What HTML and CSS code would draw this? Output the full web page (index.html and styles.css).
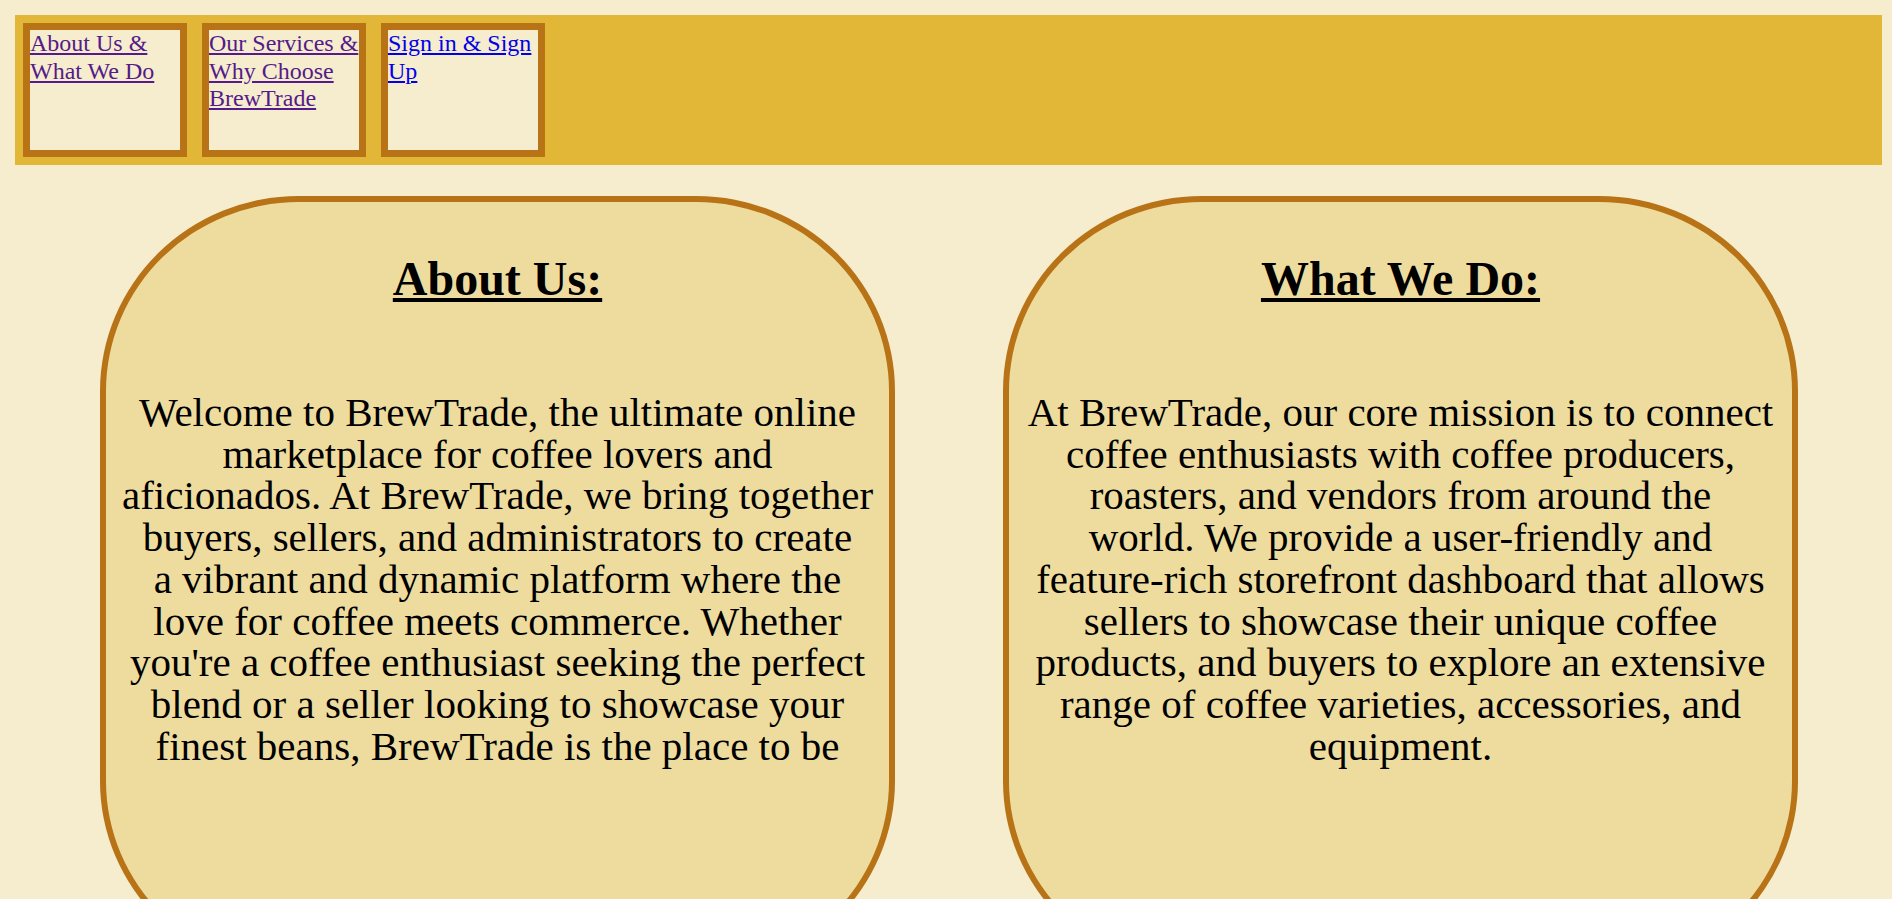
FILE: index.html
```html
<!DOCTYPE html>
<html lang="en">
<head>
<meta charset="utf-8">
<title>BrewTrade - About Us</title>
<link rel="stylesheet" href="styles.css">
</head>
<body>
<header class="topbar">
  <nav class="nav">
    <div class="nav-box"><a class="nav-link visited" href="#about">About Us &amp; What We Do</a></div>
    <div class="nav-box"><a class="nav-link visited" href="#services">Our Services &amp; Why Choose BrewTrade</a></div>
    <div class="nav-box"><a class="nav-link" href="#signin">Sign in &amp; Sign Up</a></div>
  </nav>
</header>
<main class="cards">
  <section class="card" id="about">
    <h1 class="card-title">About Us:</h1>
    <p class="card-text">Welcome to BrewTrade, the ultimate online<br>marketplace for coffee lovers and<br>aficionados. At BrewTrade, we bring together<br>buyers, sellers, and administrators to create<br>a vibrant and dynamic platform where the<br>love for coffee meets commerce. Whether<br>you're a coffee enthusiast seeking the perfect<br>blend or a seller looking to showcase your<br>finest beans, BrewTrade is the place to be</p>
  </section>
  <section class="card">
    <h1 class="card-title">What We Do:</h1>
    <p class="card-text">At BrewTrade, our core mission is to connect<br>coffee enthusiasts with coffee producers,<br>roasters, and vendors from around the<br>world. We provide a user-friendly and<br>feature-rich storefront dashboard that allows<br>sellers to showcase their unique coffee<br>products, and buyers to explore an extensive<br>range of coffee varieties, accessories, and<br>equipment.</p>
  </section>
</main>
</body>
</html>
```

FILE: styles.css
```css
html, body {
  margin: 0;
  padding: 0;
}

body {
  background: #f5edcd;
  font-family: "Liberation Serif", "Times New Roman", serif;
  color: #000;
}

.topbar {
  margin: 15px 10px 0 15px;
  padding: 8px;
  background: #e2b737;
}

.nav {
  display: flex;
  gap: 15px;
}

.nav-box {
  width: 150px;
  height: 120px;
  border: 7px solid #b87317;
  background: #f5edcd;
}

.nav-link {
  font-size: 24px;
  line-height: 27.5px;
  color: #0000ee;
  text-decoration: underline;
}

.nav-link.visited {
  color: #551a8b;
}

.cards {
  display: flex;
  gap: 108px;
  padding-left: 100px;
  margin-top: 31px;
}

.card {
  box-sizing: border-box;
  width: 795px;
  height: 780px;
  flex: none;
  border: 6px solid #b87317;
  border-radius: 25%;
  background: #eedc9f;
  padding: 49px 10px 0;
  text-align: center;
}

.card-title {
  margin: 0;
  font-size: 48px;
  line-height: 55px;
  font-weight: bold;
  text-decoration: underline;
}

.card-text {
  margin: 86px 0 0;
  font-size: 41px;
  line-height: 41.7px;
}
```
